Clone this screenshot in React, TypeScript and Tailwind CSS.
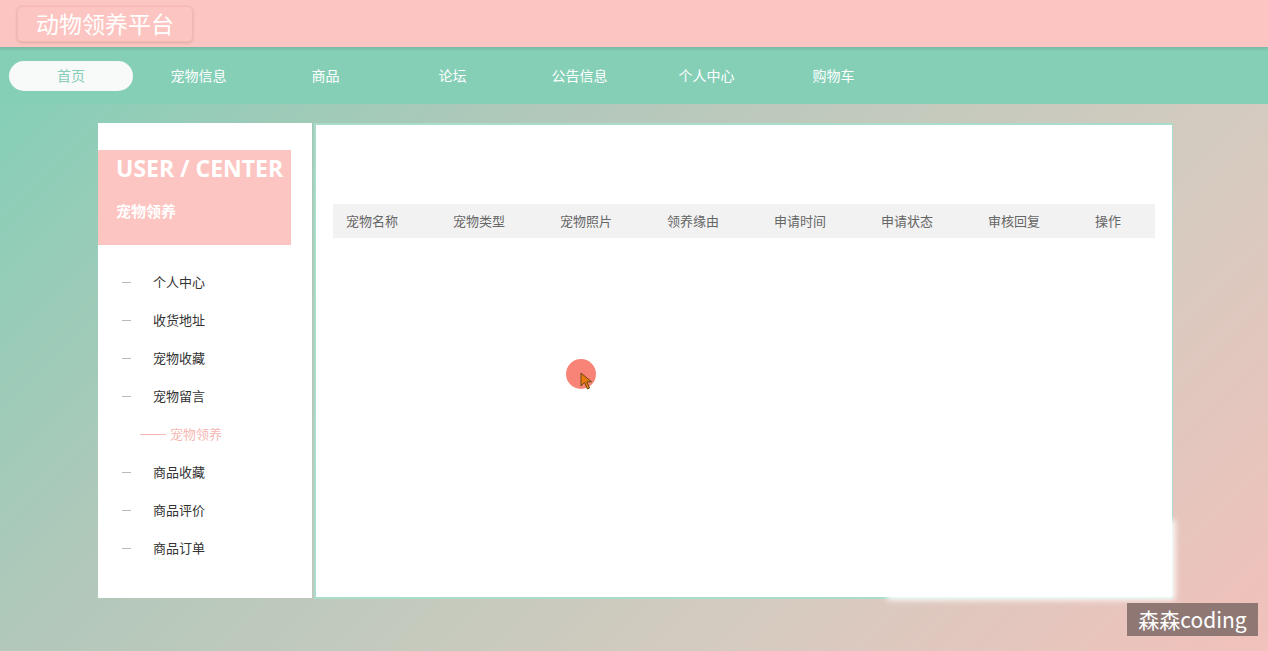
import React from "react";

const navItems = ["首页", "宠物信息", "商品", "论坛", "公告信息", "个人中心", "购物车"];
const menu = ["个人中心", "收货地址", "宠物收藏", "宠物留言", "宠物领养", "商品收藏", "商品评价", "商品订单"];
const cols = ["宠物名称", "宠物类型", "宠物照片", "领养缘由", "申请时间", "申请状态", "审核回复", "操作"];

export default function App() {
  return (
    <div
      className="relative w-[1268px] h-[651px] overflow-hidden"
      style={{ fontFamily: '"Noto Sans CJK SC", "Noto Sans", sans-serif' }}
    >
      <header className="h-[47px] bg-[#fdc5c1] flex items-center pl-[17px] relative z-10 shadow-[0_2px_3px_rgba(0,0,0,0.12)]">
        <div className="h-[36px] w-[176px] rounded-[5px] border border-[#f6b6b1] shadow-[0_1px_3px_rgba(0,0,0,0.15)] flex items-center justify-center text-[23px] text-white">
          动物领养平台
        </div>
      </header>
      <nav className="h-[57px] bg-[#85cfb7] flex items-center pl-[9px]">
        {navItems.map((n, i) => (
          <div
            key={n}
            className={
              i === 0
                ? "w-[124px] h-[30px] mr-[2px] rounded-full bg-[#f8fafa] text-[#86cdb7] text-[14px] flex items-center justify-center"
                : "w-[127px] h-[30px] text-white text-[14px] flex items-center justify-center"
            }
          >
            {n}
          </div>
        ))}
      </nav>
      <main className="h-[547px] bg-[linear-gradient(135deg,#86cfb7_0%,#b1c8ba_30%,#d5cbc0_70%,#f2c1bb_100%)] pt-[19px] pl-[98px] flex items-start">
        <aside className="w-[214px] h-[475px] bg-white pt-[27px]">
          <div className="w-[193px] h-[95px] bg-[#fdc5c1] pl-[18px] pt-[1px]">
            <div className="text-white font-bold text-[23px] leading-[34px]" style={{ fontFamily: '"Open Sans", "Noto Sans", sans-serif' }}>
              USER / CENTER
            </div>
            <div className="text-white font-bold text-[15px] mt-[15px]">宠物领养</div>
          </div>
          <ul className="mt-[18px]">
            {menu.map((m) =>
              m === "宠物领养" ? (
                <li key={m} className="h-[38px] flex items-center pl-[42px] text-[13px] text-[#f7b8b4]">
                  <span className="inline-block w-[26px] h-px bg-[#f7b8b4] mr-[4px]" />
                  {m}
                </li>
              ) : (
                <li key={m} className="h-[38px] flex items-center pl-[24px] text-[13px] text-[#333]">
                  <span className="inline-block w-[9px] h-px bg-[#bbb] mr-[22px]" />
                  {m}
                </li>
              )
            )}
          </ul>
        </aside>
        <section className="ml-[2px] w-[859px] h-[476px] bg-white border-[2px] border-[#a9dccb] border-r-[1px] pt-[79px] px-[17px]">
          <div className="h-[34px] bg-[#f2f2f2] flex items-center overflow-hidden text-[13px] text-[#666]">
            {cols.map((c) => (
              <div key={c} className="w-[107px] shrink-0 pl-[13px]">{c}</div>
            ))}
          </div>
        </section>
      </main>
      <div className="absolute left-[887px] top-[520px] w-[288px] h-[80px] bg-white blur-[3px]" />
      <div className="absolute left-[566px] top-[359px] w-[30px] h-[30px] rounded-full bg-[#f88478]" />
      <svg className="absolute left-[580px] top-[372px]" width="14" height="18" viewBox="0 0 14 18">
        <path d="M1 1 L1 14 L4.5 10.5 L7.5 17 L9.5 16 L6.8 9.8 L11.5 9.8 Z" fill="#e8780e" stroke="#6b4a10" strokeWidth="1" />
      </svg>
      <div
        className="absolute left-[1127px] top-[603px] w-[131px] h-[33px] bg-[#8f7874] text-white text-[21px] flex items-center justify-center"
        style={{ fontFamily: '"Noto Sans CJK SC", "Open Sans", sans-serif' }}
      >
        森森coding
      </div>
    </div>
  );
}
